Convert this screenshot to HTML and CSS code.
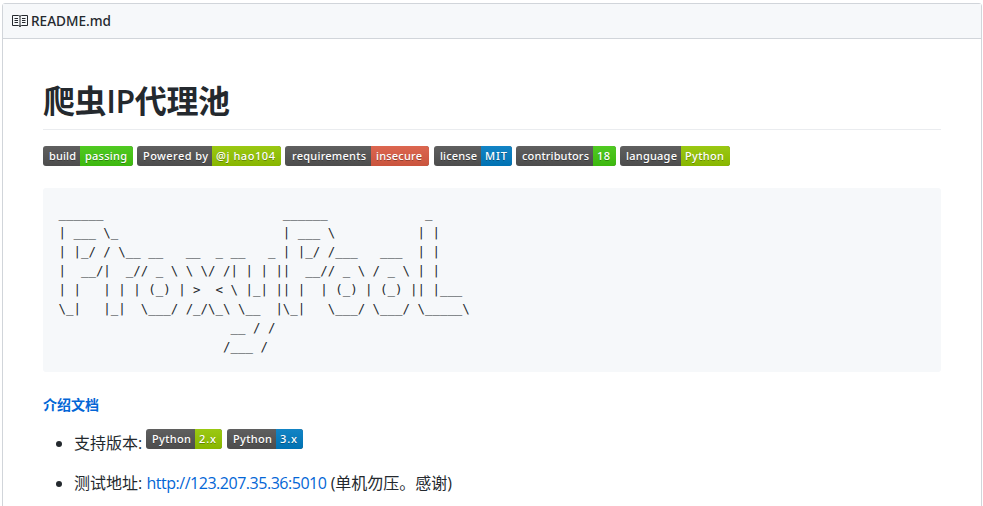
FILE: index.html
```html
<!DOCTYPE html>
<html lang="zh-CN">
<head>
<meta charset="utf-8">
<title>README.md</title>
<link rel="stylesheet" href="styles.css">
</head>
<body>
<div class="box">
<header class="box-header">
<svg class="book" width="16" height="16" viewBox="0 0 16 16" fill="none" stroke="#24292e"><path d="M.5 2.5H6.5Q8 2.5 8 3.7Q8 2.5 9.5 2.5H15.5V12.5H9.5Q8 12.5 8 14Q8 12.5 6.5 12.5H.5ZM8 3.5V13M2.5 5.5H6M2.5 7.5H6M2.5 9.5H6M10 5.5H13.5M10 7.5H13.5M10 9.5H13.5"/></svg>
<span class="filename"><svg width="81" height="20"><text x="0" y="15" textLength="80" lengthAdjust="spacingAndGlyphs">README.md</text></svg></span>
</header>
<article class="content">
<h1>爬虫<span class="latin">IP</span>代理池</h1>
<div class="badges">
<svg class="badge" width="90" height="20"><rect class="dark" width="90" height="20"/><rect class="green" x="37" width="53" height="20"/><rect class="shade" width="90" height="20"/><text x="6" y="14" textLength="27">build</text><text x="42" y="14" textLength="42">passing</text></svg>
<svg class="badge" width="144" height="20"><rect class="dark" width="144" height="20"/><rect class="lime" x="75" width="69" height="20"/><rect class="shade" width="144" height="20"/><text x="6" y="14" textLength="65">Powered by</text><text x="79" y="14" textLength="59">@j hao104</text></svg>
<svg class="badge" width="144" height="20"><rect class="dark" width="144" height="20"/><rect class="red" x="86" width="58" height="20"/><rect class="shade" width="144" height="20"/><text x="7" y="14" textLength="74">requirements</text><text x="91" y="14" textLength="46">insecure</text></svg>
<svg class="badge wide" width="78" height="20"><rect class="dark" width="78" height="20"/><rect class="blue" x="47" width="31" height="20"/><rect class="shade" width="78" height="20"/><text x="6" y="14" textLength="37">license</text><text x="51" y="14" textLength="22">MIT</text></svg>
<svg class="badge" width="100" height="20"><rect class="dark" width="100" height="20"/><rect class="green" x="77" width="23" height="20"/><rect class="shade" width="100" height="20"/><text x="6" y="14" textLength="67">contributors</text><text x="81" y="14" textLength="13">18</text></svg>
<svg class="badge" width="110" height="20"><rect class="dark" width="110" height="20"/><rect class="lime" x="61" width="49" height="20"/><rect class="shade" width="110" height="20"/><text x="6" y="14" textLength="51">language</text><text x="65" y="14" textLength="39">Python</text></svg>
</div>
<pre>______                        ______             _
| ___ \_                      | ___ \           | |
| |_/ / \__ __   __  _ __   _ | |_/ /___   ___  | |
|  __/|  _// _ \ \ \/ /| | | ||  __// _ \ / _ \ | |
| |   | | | (_) | &gt;  &lt; \ |_| || |  | (_) | (_) || |___
\_|   |_|  \___/ /_/\_\ \__  |\_|   \___/ \___/ \_____\
                       __ / /
                      /___ /</pre>
<h5><a>介绍文档</a></h5>
<ul>
<li><span>支持版本:</span>
<svg class="badge first" width="76" height="20"><rect class="dark" width="76" height="20"/><rect class="lime" x="49" width="27" height="20"/><rect class="shade" width="76" height="20"/><text x="6" y="14" textLength="39">Python</text><text x="53" y="14" textLength="17">2.x</text></svg>
<svg class="badge" width="76" height="20"><rect class="dark" width="76" height="20"/><rect class="blue" x="49" width="27" height="20"/><rect class="shade" width="76" height="20"/><text x="6" y="14" textLength="39">Python</text><text x="53" y="14" textLength="17">3.x</text></svg>
</li>
<li><span>测试地址:</span> <a class="url">http://123.207.35.36:5010</a> <span>(单机勿压。感谢)</span></li>
</ul>
</article>
</div>
<svg class="defs" width="0" height="0"><defs><linearGradient id="shade" x2="0" y2="1"><stop offset="0" stop-color="#bbb" stop-opacity=".1"/><stop offset="1" stop-opacity=".1"/></linearGradient></defs></svg>
</body>
</html>
```
FILE: styles.css
```css
* { box-sizing: border-box; }
body {
  margin: 0;
  height: 506px;
  overflow: hidden;
  background: #fff;
  color: #24292e;
  font: 16px/24px "Open Sans", "Noto Sans CJK SC", sans-serif;
}
.box {
  width: 980px;
  height: 520px;
  margin: 3px 0 0 2px;
  border: 1px solid #d1d5da;
  border-radius: 3px;
}
.box-header {
  display: flex;
  align-items: center;
  gap: 2.5px;
  height: 35px;
  padding-left: 9px;
  background: #f6f8fa;
  border-bottom: 1px solid #d1d5da;
}
.filename { height: 20px; line-height: 0; }
.filename text {
  font: 500 13.5px "Noto Sans", sans-serif;
  fill: #24292e;
}
.content { padding: 40px 40px 0; }
h1 {
  height: 51px;
  margin: 0 0 16px;
  border-bottom: 1px solid #eaecef;
  font: 700 32px/40px "Noto Sans CJK SC", sans-serif;
  letter-spacing: -0.4px;
}
.latin { font-family: "Open Sans", sans-serif; font-weight: 600; }
.badges { display: flex; gap: 4px; height: 20px; }
.badge { display: block; flex: none; border-radius: 3px; overflow: hidden; }
.badge.wide { margin-left: 1px; }
.badge text {
  font: 550 11px "Noto Sans", "DejaVu Sans", sans-serif;
  fill: #fff;
  text-shadow: 0 1px rgba(1, 1, 1, .3);
}
.dark { fill: #555; }
.green { fill: #4c1; }
.lime { fill: #97ca00; }
.red { fill: #e05d44; }
.blue { fill: #007ec6; }
.shade { fill: url(#shade); }
pre {
  height: 184px;
  margin: 22px 0 0;
  padding: 16px 15.5px;
  background: #f6f8fa;
  border-radius: 3px;
  font: 12.43px/19px "DejaVu Sans Mono", monospace;
}
h5 {
  margin: 23px 0 18px;
  font: 700 14px/18px "Noto Sans CJK SC", sans-serif;
}
a { color: #0366d6; }
ul { margin: 0; padding: 0 0 0 31px; }
li { height: 24px; margin-bottom: 16px; white-space: nowrap; }
li::marker { color: #24292e; }
li .badge { display: inline-block; vertical-align: 0; margin-top: -4px; }
.url { letter-spacing: -0.47px; }
.defs { display: block; }
```
